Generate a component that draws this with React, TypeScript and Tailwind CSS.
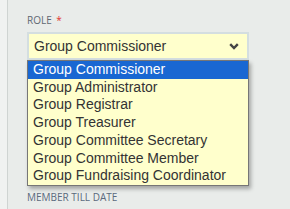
const roles = [
  "Group Commissioner",
  "Group Administrator",
  "Group Registrar",
  "Group Treasurer",
  "Group Committee Secretary",
  "Group Committee Member",
  "Group Fundraising Coordinator",
];

export default function App() {
  return (
    <div className="w-[290px] h-[209px] overflow-hidden bg-[#f0f2f1] flex">
      <div className="w-[7px] shrink-0" />
      <div className="flex-1 border-l border-[#cfd4d2] bg-[#e9ecea] pl-[19px] pt-[13px]">
        {/* Role field */}
        <div className="font-['Open_Sans',sans-serif] text-[10px] leading-[14px] text-[#5f6873] uppercase">
          Role <span className="text-[#e0332f] ml-[2px]">*</span>
        </div>
        <div className="relative mt-[5px] w-[222px]">
          <div className="h-[28px] border-2 border-[#d4dee0] bg-[#ffffcc] flex items-center pl-[5px] pr-[6px] font-['Liberation_Sans',Arial,sans-serif] text-[14px] text-[#333]">
            <span className="flex-1 pt-[1px]">Group Commissioner</span>
            <svg width="10" height="7" viewBox="0 0 10 7" className="mr-[2px]">
              <polyline points="1.2,1.2 5,5 8.8,1.2" fill="none" stroke="#444" strokeWidth="2.4" />
            </svg>
          </div>
          {/* Open dropdown list */}
          <ul className="relative z-10 border border-[#767676] bg-[#ffffcc] shadow-[2px_3px_4px_rgba(0,0,0,0.3)] font-['Liberation_Sans',Arial,sans-serif] text-[14px] leading-[17.7px] text-[#333]">
            {roles.map((r, i) => (
              <li key={r} className={i === 0 ? "pl-[5px] bg-[#1967d2] text-white" : "pl-[5px]"}>
                {r}
              </li>
            ))}
          </ul>
        </div>
        <div className="mt-[4px] font-['Open_Sans',sans-serif] text-[10px] leading-[14px] text-[#5b6a7d] uppercase">
          Member till date
        </div>
      </div>
    </div>
  );
}
